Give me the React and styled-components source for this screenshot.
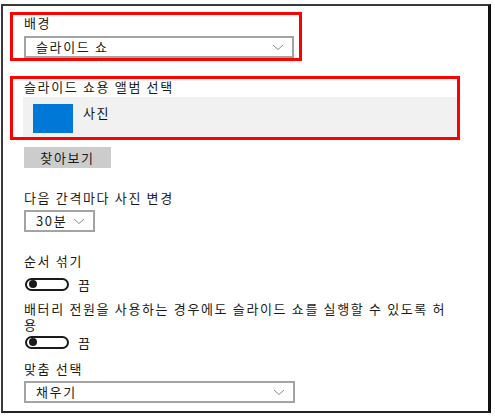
import React from 'react';
import styled, { createGlobalStyle } from 'styled-components';

const GlobalStyle = createGlobalStyle`
	html, body {
		margin: 0;
		padding: 0;
		background: #fff;
	}
	body {
		font-family: "Noto Sans CJK KR", "Noto Sans", sans-serif;
		color: #111;
	}
`;

const Frame = styled.div`
	box-sizing: border-box;
	width: 490px;
	height: 409px;
	margin: 4px 0 0 1px;
	padding: 6px 0 0 7px;
	border: 2px solid #3a3a3a;
	border-right: 3px solid #111;
	border-bottom-color: #222;
	display: flex;
	flex-direction: column;
	align-items: flex-start;
`;

const Highlight = styled.div`
	box-sizing: border-box;
	width: ${(p) => p.width}px;
	margin-top: ${(p) => p.top || 0}px;
	border: 3px solid #ff0000;
	display: flex;
	flex-direction: column;
	align-items: flex-start;
`;

const Label = styled.div`
	font-size: 13px;
	line-height: 16px;
	letter-spacing: 1.65px;
	color: #1a1a1a;
	margin-top: ${(p) => p.top || 0}px;
	margin-left: ${(p) => p.left || 0}px;
	margin-bottom: ${(p) => p.bottom || 0}px;
	max-width: ${(p) => p.max || 'none'};
`;

const Section = styled.div`
	display: flex;
	flex-direction: column;
	align-items: flex-start;
	padding-left: 14px;
`;

const Select = styled.div`
	box-sizing: border-box;
	width: ${(p) => p.width}px;
	height: 22px;
	margin-left: ${(p) => p.left || 0}px;
	margin-bottom: ${(p) => p.bottom || 0}px;
	border: 2px solid #a3a3a3;
	background: #fff;
	display: flex;
	align-items: center;
	justify-content: space-between;
	padding: 0 8px 0 10px;
	font-size: 13px;
	letter-spacing: 1.65px;
	color: #1a1a1a;

	& svg {
		flex: none;
	}
`;

const SelectText = styled.span`
	line-height: 16px;
`;

const Chevron = () => (
	<svg width="12" height="7" viewBox="0 0 12 7">
		<path d="M1 1 L6 5.5 L11 1" fill="none" stroke="#8a8a8a" strokeWidth="1" />
	</svg>
);

const AlbumPanel = styled.div`
	box-sizing: border-box;
	align-self: stretch;
	margin: 2px 0 0 10px;
	height: 40px;
	background: #f1f1f1;
	display: flex;
	align-items: flex-start;
	padding: 7px 0 0 10px;
	gap: 10px;
`;

const AlbumThumb = styled.div`
	width: 40px;
	height: 29px;
	background: #0078d7;
`;

const AlbumName = styled.span`
	font-size: 13px;
	line-height: 16px;
	letter-spacing: 1.65px;
	padding-top: 1px;
`;

const Button = styled.div`
	box-sizing: border-box;
	width: 87px;
	height: 21px;
	margin-top: 7px;
	background: #cccccc;
	display: flex;
	align-items: center;
	justify-content: center;
	font-size: 13px;
	letter-spacing: 1.65px;
	color: #1a1a1a;
`;

const ToggleRow = styled.div`
	display: flex;
	align-items: center;
	gap: 9px;
	height: 14px;
	margin-top: ${(p) => p.top || 0}px;
	padding-left: 1px;
	font-size: 13px;
	letter-spacing: 1.65px;
`;

const Toggle = styled.div`
	box-sizing: border-box;
	width: 44px;
	height: 13px;
	border: 2px solid #1a1a1a;
	border-radius: 7px;
	display: flex;
	align-items: center;
	padding-left: 2px;

	&::before {
		content: '';
		width: 8px;
		height: 8px;
		border-radius: 50%;
		background: #1a1a1a;
	}
`;

const App = () => (
	<>
		<GlobalStyle />
		<Frame>
			<Highlight width={292}>
				<Label left={11} bottom={5}>배경</Label>
				<Select width={270} left={11}>
					<SelectText>슬라이드 쇼</SelectText>
					<Chevron />
				</Select>
			</Highlight>

			<Highlight width={450} top={15}>
				<Label left={11}>슬라이드 쇼용 앨범 선택</Label>
				<AlbumPanel>
					<AlbumThumb />
					<AlbumName>사진</AlbumName>
				</AlbumPanel>
			</Highlight>

			<Section>
				<Button>찾아보기</Button>

				<Label top={22} bottom={4}>다음 간격마다 사진 변경</Label>
				<Select width={71}>
					<SelectText>30분</SelectText>
					<Chevron />
				</Select>

				<Label top={21}>순서 섞기</Label>
				<ToggleRow top={8}>
					<Toggle />
					끔
				</ToggleRow>

				<Label top={10} max="428px">
					배터리 전원을 사용하는 경우에도 슬라이드 쇼를 실행할 수 있도록 허용
				</Label>
				<ToggleRow top={2}>
					<Toggle />
					끔
				</ToggleRow>

				<Label top={12} bottom={4}>맞춤 선택</Label>
				<Select width={271}>
					<SelectText>채우기</SelectText>
					<Chevron />
				</Select>
			</Section>
		</Frame>
	</>
);

export default App;
